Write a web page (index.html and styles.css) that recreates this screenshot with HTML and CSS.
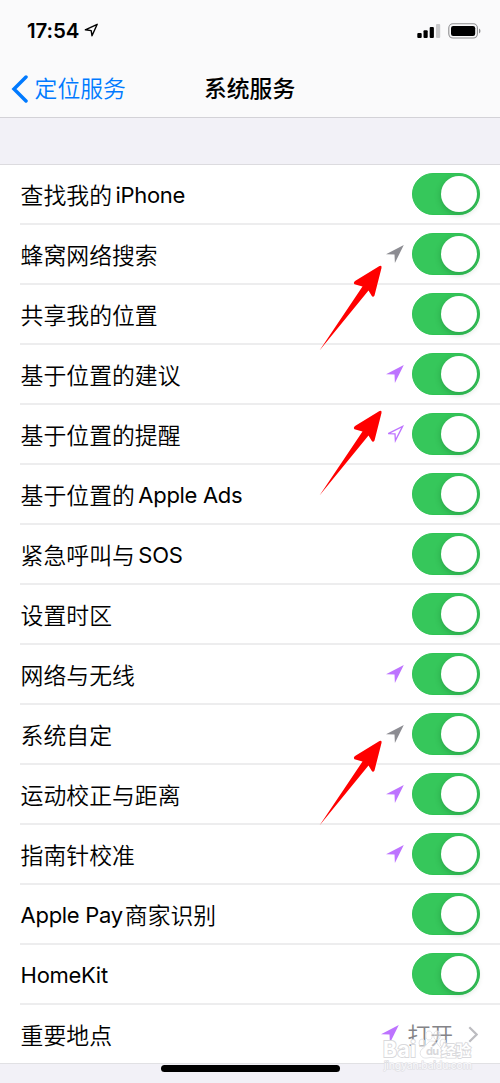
FILE: index.html
```html
<!DOCTYPE html>
<html lang="zh-CN">
<head>
<meta charset="utf-8">
<meta name="viewport" content="width=device-width">
<title>系统服务</title>
<link rel="stylesheet" href="styles.css">
</head>
<body>
<svg class="defs" width="0" height="0" aria-hidden="true">
  <symbol id="loc" viewBox="0 0 18 18"><path d="M17.8 0 L8.9 18 L8.5 9.4 L0 9.2 Z" fill="currentColor"/></symbol>
  <symbol id="loc-outline" viewBox="0 0 18 18"><path d="M16.6 1.4 L9.4 15.6 L9 8.9 L2.2 8.7 Z" fill="none" stroke="currentColor" stroke-width="1.3"/></symbol>
  <symbol id="pointer" viewBox="0 0 64 86"><path d="M0.5 85.5 L43.5 21.5 L35.5 19.2 Q34 18 36 16 L60.5 1 Q63 0 62.5 3 L55.5 30.5 Q54 33 52.5 30.5 L49.5 25.5 Z" fill="#f00"/></symbol>
</svg>
<main class="screen">
  <header class="top">
    <div class="status">
      <span class="time">17:54</span>
      <svg class="status-loc" viewBox="0 0 15 15"><path d="M13.2 1.3 L8 12.8 L7.2 7.6 L1.3 6.8 Z" fill="none" stroke="#000" stroke-width="1.4" stroke-linejoin="round"/></svg>
      <svg class="signal" viewBox="0 0 24 15"><rect x="0.3" y="9" width="4.4" height="5" rx="1"/><rect x="6.5" y="6.3" width="4.2" height="7.7" rx="1"/><rect x="12.7" y="3" width="4.2" height="11" rx="1"/><rect x="19" y="0" width="4.2" height="14" rx="1" fill="#c8c8ca"/></svg>
      <svg class="battery" viewBox="0 0 34 16"><rect x=".8" y=".8" width="28.6" height="14.2" rx="4.2" fill="none" stroke="#8e8e90" stroke-width="1.1"/><rect x="3" y="3" width="24.2" height="9.9" rx="2.2"/><path d="M31 5.4 Q32.5 6.1 32.5 7.9 Q32.5 9.7 31 10.4 Z" fill="#8e8e90"/></svg>
    </div>
    <nav class="nav">
      <a class="back"><svg class="back-icon" viewBox="0 0 17 28"><path d="M15 2 L3 14 L15 26" fill="none" stroke="currentColor" stroke-width="3.5" stroke-linecap="round"/></svg><span>定位服务</span></a>
      <h1 class="title">系统服务</h1>
    </nav>
  </header>
  <div class="spacer"></div>
  <ul class="list">
    <li class="row"><span class="label">查找我的<span class="en gap">iPhone</span></span><i class="switch"></i></li>
    <li class="row"><span class="label">蜂窝网络搜索</span><svg class="loc gray"><use href="#loc"/></svg><i class="switch"></i></li>
    <li class="row"><span class="label">共享我的位置</span><i class="switch"></i></li>
    <li class="row"><span class="label">基于位置的建议</span><svg class="loc"><use href="#loc"/></svg><i class="switch"></i></li>
    <li class="row"><span class="label">基于位置的提醒</span><svg class="loc"><use href="#loc-outline"/></svg><i class="switch"></i></li>
    <li class="row"><span class="label">基于位置的<span class="en gap">Apple Ads</span></span><i class="switch"></i></li>
    <li class="row"><span class="label">紧急呼叫与<span class="en gap">SOS</span></span><i class="switch"></i></li>
    <li class="row"><span class="label">设置时区</span><i class="switch"></i></li>
    <li class="row"><span class="label">网络与无线</span><svg class="loc"><use href="#loc"/></svg><i class="switch"></i></li>
    <li class="row"><span class="label">系统自定</span><svg class="loc gray"><use href="#loc"/></svg><i class="switch"></i></li>
    <li class="row"><span class="label">运动校正与距离</span><svg class="loc"><use href="#loc"/></svg><i class="switch"></i></li>
    <li class="row"><span class="label">指南针校准</span><svg class="loc"><use href="#loc"/></svg><i class="switch"></i></li>
    <li class="row"><span class="label"><span class="en lead">Apple Pay</span>商家识别</span><i class="switch"></i></li>
    <li class="row"><span class="label"><span class="en">HomeKit</span></span><i class="switch"></i></li>
    <li class="row last"><span class="label">重要地点</span><svg class="loc"><use href="#loc"/></svg><span class="value">打开</span><svg class="chevron" viewBox="0 0 10 17"><path d="M1.3 1.3 L8.6 8.5 L1.3 15.7" fill="none" stroke="#bcbcc0" stroke-width="2.2"/></svg></li>
  </ul>
  <div class="home"></div>
  <svg class="pointer p1"><use href="#pointer"/></svg>
  <svg class="pointer p2"><use href="#pointer"/></svg>
  <svg class="pointer p3"><use href="#pointer"/></svg>
  <svg class="mark" viewBox="0 0 96 46">
    <g class="mark-shape">
      <ellipse cx="39" cy="15" rx="3" ry="4"/><ellipse cx="46" cy="7.5" rx="3.2" ry="4.5"/><ellipse cx="54" cy="7.5" rx="3.2" ry="4.5"/><ellipse cx="60" cy="15" rx="3" ry="4"/>
      <path d="M49 13 C44 13 44 18 39 21 C35 25 38 31 44 30 Q49 28.5 54 30 C62 31 64 25 59 21 C55 18 54 13 49 13 Z"/>
    </g>
    <text class="mark-text" x="0" y="29" font-size="21" textLength="33">Bai</text>
    <text class="mark-du" x="43" y="27" font-size="11" textLength="13">du</text>
    <text class="mark-text" x="58" y="28" font-size="15">经验</text>
    <text class="mark-url" x="1" y="41" font-size="10.5" textLength="88">jingyan.baidu.com</text>
  </svg>
</main>
</body>
</html>
```
FILE: styles.css
```css
* { box-sizing: border-box; }
body { margin: 0; background: #f2f1f7; font-family: Inter, "Noto Sans CJK SC", sans-serif; color: #000; }
.defs { position: absolute; }
.screen { position: relative; width: 500px; height: 1083px; overflow: hidden; }
.top { height: 118px; background: #fafafb; border-bottom: 1px solid #d3d2d7; }
.status { display: flex; height: 60px; padding: 0 19px 0 27px; align-items: center; }
.time { font-size: 20.5px; font-weight: 600; width: 56px; letter-spacing: -0.1px; line-height: 24px; white-space: nowrap; padding-top: 2px; }
.status-loc { width: 15px; height: 15px; margin-left: 1px; }
.signal { width: 24px; height: 15px; margin-left: auto; margin-top: 3px; }
.battery { width: 34px; height: 16px; margin: 2px -1px 0 7px; }
.nav { display: grid; grid-template-columns: 1fr 92px 1fr; align-items: center; height: 57px; }
.back { display: flex; align-items: center; color: #007aff; padding-left: 11px; gap: 6.6px; font-size: 22.8px; font-weight: 350; line-height: 34px; white-space: nowrap; }
.back-icon { width: 17px; height: 28px; }
.title { margin: 0; font-size: 22.8px; font-weight: 500; line-height: 34px; white-space: nowrap; }
.spacer { height: 46px; }
.list { margin: 0; padding: 0; list-style: none; background: #fff; border-top: 1px solid #dcdbdf; }
.row { display: flex; align-items: center; height: 60px; margin-left: 20px; padding: 0 20px 0 0; border-bottom: 2px solid #ededee; }
.row.last { height: 59px; margin-left: 0; padding-left: 20px; padding-right: 22px; border-bottom: 1px solid #e1e1e4; }
.label { flex: 1; padding: 3px 0 0 .6px; font-size: 22.85px; font-weight: 350; line-height: 34px; white-space: nowrap; }
.en { font-size: 22px; font-weight: 400; letter-spacing: -0.3px; line-height: 1; vertical-align: 1px; }
.gap { margin-left: 3.5px; }
.lead { margin-right: 2px; }
.switch { width: 68px; height: 42px; border-radius: 21px; background: #36c75b; border: 1px solid #30c455; padding: 2px 2px 0 28px; }
.switch::before { content: ""; display: block; width: 36px; height: 36px; border-radius: 50%; background: #fff; box-shadow: 0 2px 6px rgba(0,70,20,.28); }
.loc { width: 18px; height: 18px; margin-right: 8px; color: #bd73ff; }
.loc.gray { color: #8c8c92; }
.value { padding-top: 3px; font-size: 22.8px; font-weight: 350; line-height: 34px; color: #848488; }
.chevron { width: 10px; height: 17px; margin-left: 15px; }
.home { position: absolute; left: 161px; top: 1065px; width: 179px; height: 7px; border-radius: 4px; background: #000; }
.pointer { position: absolute; left: 319px; width: 64px; height: 86px; filter: drop-shadow(0 0 1px #fff); }
.p1 { top: 265px; }
.p2 { top: 410px; }
.p3 { top: 740px; }
.mark { position: absolute; left: 383px; top: 1028px; width: 96px; height: 46px; overflow: visible; }
.mark-shape { fill: rgba(255,255,255,.45); stroke: #dedee1; stroke-width: .8px; }
.mark-text { font-weight: 700; fill: #fff; stroke: #d9d9dc; stroke-width: 1.8px; paint-order: stroke; }
.mark-du { font-weight: 700; fill: #d8d8db; }
.mark-url { font-weight: 500; fill: #f7f7fa; stroke: #dedee2; stroke-width: 1.2px; paint-order: stroke; }
```
